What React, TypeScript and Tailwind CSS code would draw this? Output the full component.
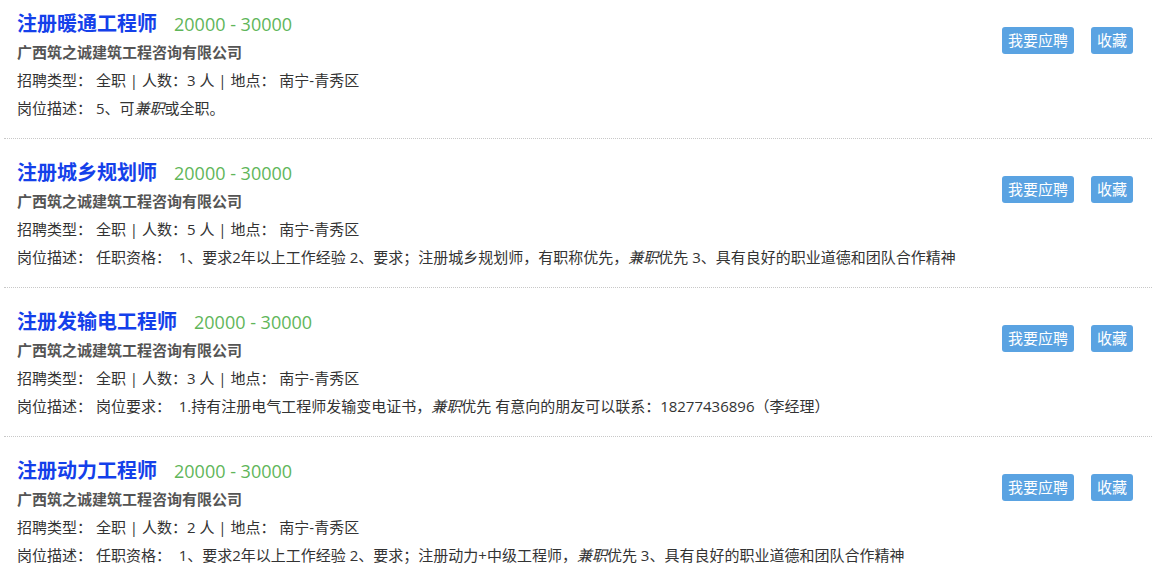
const jobs = [
  {
    title: "注册暖通工程师",
    count: 3,
    desc: (
      <>
        5、可<em>兼职</em>或全职。
      </>
    ),
  },
  {
    title: "注册城乡规划师",
    count: 5,
    desc: (
      <>
        任职资格：  1、要求2年以上工作经验 2、要求；注册城乡规划师，有职称优先，<em>兼职</em>优先 3、具有良好的职业道德和团队合作精神
      </>
    ),
  },
  {
    title: "注册发输电工程师",
    count: 3,
    desc: (
      <>
        岗位要求：  1.持有注册电气工程师发输变电证书，<em>兼职</em>优先 有意向的朋友可以联系：18277436896（李经理）
      </>
    ),
  },
  {
    title: "注册动力工程师",
    count: 2,
    desc: (
      <>
        任职资格：  1、要求2年以上工作经验 2、要求；注册动力+中级工程师，<em>兼职</em>优先 3、具有良好的职业道德和团队合作精神
      </>
    ),
  },
];

const App = () => {
  return (
    <div className="h-[566px] overflow-hidden bg-white font-['Open_Sans','Noto_Sans_CJK_SC',sans-serif]">
      <div className="ml-1 w-[1148px] -mt-[10px]">
        {jobs.map((job, i) => (
          <div
            key={i}
            className="flex justify-between pt-5 pb-4 pl-[13px] pr-[19px] border-b border-dotted border-[#c8c8c8]"
          >
            <div>
              <div className="flex items-center h-7">
                <h3 className="m-0 text-[20px] font-bold text-[#1440ea]">{job.title}</h3>
                <span className="ml-[17px] text-[18px] text-[#5fb65a]">20000 - 30000</span>
              </div>
              <div className="h-7 flex items-center text-[15px] font-bold text-[#555]">
                广西筑之诚建筑工程咨询有限公司
              </div>
              <div className="h-7 flex items-center text-[15px] text-[#333] whitespace-pre">
                {`招聘类型： 全职 | 人数：${job.count} 人 | 地点： 南宁-青秀区`}
              </div>
              <div className="h-7 flex items-center text-[15px] text-[#333] whitespace-pre">
                岗位描述： {job.desc}
              </div>
            </div>
            <div className="flex items-start gap-[17px] pt-[17px]">
              <button className="h-[27px] px-[6px] rounded-[3px] bg-[#5aa3e2] text-white text-[15px]">我要应聘</button>
              <button className="h-[27px] px-[6px] rounded-[3px] bg-[#5aa3e2] text-white text-[15px]">收藏</button>
            </div>
          </div>
        ))}
      </div>
    </div>
  );
};

export default App;
